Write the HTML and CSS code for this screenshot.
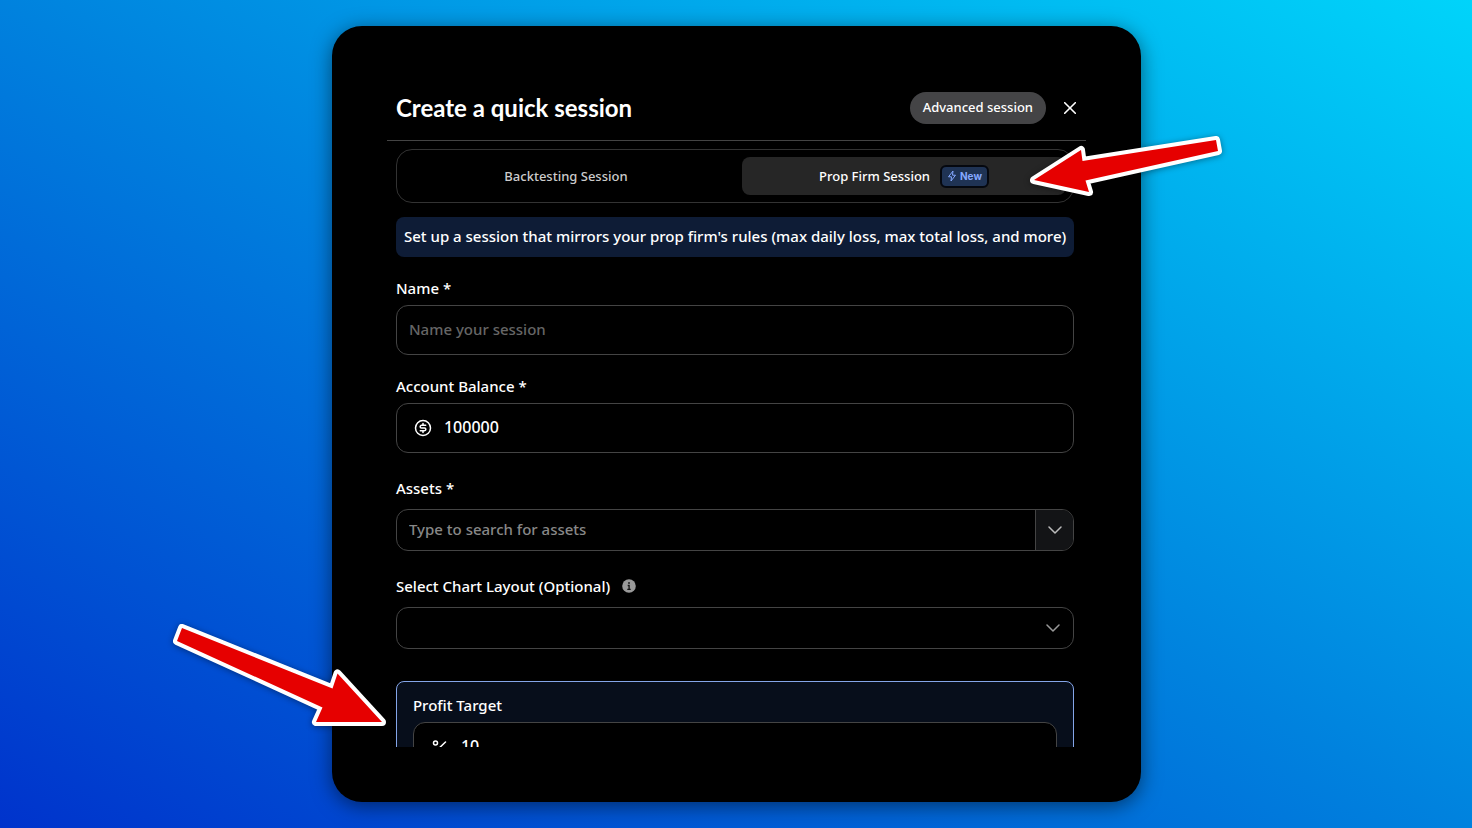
FILE: index.html
```html
<!DOCTYPE html>
<html lang="en">
<head>
    <meta charset="UTF-8">
    <meta name="viewport" content="width=device-width, initial-scale=1.0">
    <title>Create a quick session</title>
    <link rel="stylesheet" href="styles.css">
</head>
<body>
    <main class="modal">
        <header class="modal-header">
            <h1>Create a quick session</h1>
            <button type="button" class="advanced-btn">Advanced session</button>
            <button type="button" class="close-btn" aria-label="Close">
                <svg width="12" height="12" viewBox="0 0 12 12" fill="none" stroke="currentColor" stroke-width="1.6" stroke-linecap="round">
                    <path d="M.7.700l10.600 10.600M11.300.700L.7 11.300"/>
                </svg>
            </button>
        </header>

        <form class="modal-body">
            <div class="tabs">
                <button type="button" class="tab">Backtesting Session</button>
                <button type="button" class="tab active">
                    Prop Firm Session
                    <span class="badge">
                        <svg width="10" height="12" viewBox="0 0 10 12" fill="none" stroke="currentColor" stroke-linejoin="round">
                            <path d="M6 1L1.500 6.800h3L4 11l4.500-5.800h-3z"/>
                        </svg>
                        New
                    </span>
                </button>
            </div>

            <p class="notice">Set up a session that mirrors your prop firm's rules (max daily loss, max total loss, and more)</p>

            <div class="field">
                <label for="name">Name *</label>
                <div class="control tall">
                    <input type="text" id="name" placeholder="Name your session">
                </div>
            </div>

            <div class="field">
                <label for="balance">Account Balance *</label>
                <div class="control tall with-icon">
                    <svg width="18" height="18" viewBox="0 0 18 18" fill="none" stroke="currentColor" stroke-width="1.5" stroke-linecap="round" stroke-linejoin="round">
                        <circle cx="9" cy="9" r="7.500"/>
                        <path d="M11.700 6.300H7.500a1.350 1.350 0 0 0 0 2.700h3a1.350 1.350 0 0 1 0 2.700H6.300M9 4.600v1.700M9 11.700v1.700"/>
                    </svg>
                    <input type="text" id="balance" value="100000">
                </div>
            </div>

            <div class="field spaced">
                <label for="assets">Assets *</label>
                <div class="control">
                    <input type="text" id="assets" class="assets-input" placeholder="Type to search for assets">
                    <button type="button" class="drop-btn" aria-label="Show assets">
                        <svg width="14" height="8" viewBox="0 0 14 8" fill="none" stroke="currentColor" stroke-width="1.5" stroke-linecap="round" stroke-linejoin="round">
                            <path d="M1 1l6 6 6-6"/>
                        </svg>
                    </button>
                </div>
            </div>

            <div class="field spaced">
                <div class="label-row">
                    <label for="layout">Select Chart Layout (Optional)</label>
                    <svg width="14" height="14" viewBox="0 0 14 14">
                        <circle cx="7" cy="7" r="6.800" fill="#999"/>
                        <path d="M7 3v2M5.700 6.500H7.100V10M5.300 10.300h3.400" fill="none" stroke="#111" stroke-width="1.300"/>
                    </svg>
                </div>
                <div class="control">
                    <select id="layout">
                        <option value=""></option>
                    </select>
                    <svg class="select-arrow" width="14" height="8" viewBox="0 0 14 8" fill="none" stroke="currentColor" stroke-width="1.5" stroke-linecap="round" stroke-linejoin="round">
                        <path d="M1 1l6 6 6-6"/>
                    </svg>
                </div>
            </div>

            <section class="target-card">
                <label for="target">Profit Target</label>
                <div class="control tall with-icon">
                    <svg width="18" height="18" viewBox="0 0 18 18" fill="none" stroke="currentColor" stroke-width="1.5" stroke-linecap="round">
                        <circle cx="4.500" cy="5" r="2"/>
                        <circle cx="13" cy="13" r="2"/>
                        <path d="M14.500 4L3.500 14.500"/>
                    </svg>
                    <input type="text" id="target" value="10">
                </div>
            </section>
        </form>

        <!-- callout arrows -->
        <svg class="arrow arrow-tab" width="210" height="80" viewBox="0 0 210 80" aria-hidden="true">
            <path d="M14 50L61 20l1.500 11L196 10l2 11L65.500 50.500 69 62z"/>
        </svg>
        <svg class="arrow arrow-target" width="240" height="130" viewBox="0 0 240 130" aria-hidden="true">
            <path d="M23 18l-5 13 145.500 66.500L157 112h66l-44.500-48.500-5 15z"/>
        </svg>
    </main>
</body>
</html>
```

FILE: styles.css
```css
* {
    box-sizing: border-box;
}
body {
    margin: 0;
    padding: 26px 0 26px 1px;
    height: 100vh;
    overflow: hidden;
    background: linear-gradient(to top right, #0033cc, #0082de 50%, #00d4fa);
    color: #fff;
    font-family: "Noto Sans", sans-serif;
    font-size: 15px;
    line-height: 22px;
}
button,
input,
select {
    font: inherit;
    color: inherit;
}
button {
    border: none;
    cursor: pointer;
}
.modal {
    position: relative;
    display: flex;
    flex-direction: column;
    width: 55%;
    min-width: 760px;
    height: 100%;
    margin: 0 auto;
    padding: 55px;
    background: #000;
    border-radius: 30px;
    box-shadow: 0 4px 20px rgba(0, 0, 0, 0.5);
}
.modal-header {
    display: flex;
    align-items: center;
    padding: 11px 10px 16px 9px;
    border-bottom: 1px solid #444;
}
.modal-header h1 {
    flex: 1;
    margin: 0;
    font-family: Lato, sans-serif;
    font-size: 24px;
    line-height: 32px;
    font-weight: 700;
}
.advanced-btn {
    height: 32px;
    padding: 0 13px 2px;
    border-radius: 16px;
    background: #444446;
    font-size: 13px;
    font-weight: 500;
}
.close-btn {
    display: flex;
    margin-left: 18px;
    padding: 0;
    background: none;
}
.modal-body {
    flex: 1;
    min-height: 0;
    overflow: hidden;
    padding: 8px 12px 0 9px;
}
.tabs {
    display: grid;
    grid-template-columns: 1fr 1fr;
    gap: 14px;
    padding: 7px;
    border: 1px solid #333;
    border-radius: 16px;
}
.tab {
    display: flex;
    align-items: center;
    justify-content: center;
    gap: 10px;
    height: 38px;
    border-radius: 8px;
    background: none;
    color: #ccc;
    font-size: 13px;
    font-weight: 500;
}
.tab.active {
    background: #262626;
    color: #fff;
}
.badge {
    display: flex;
    align-items: center;
    gap: 3px;
    height: 23px;
    padding: 0 5px;
    border: 2px solid #05080f;
    border-radius: 6px;
    background: #1f3354;
    color: #85a8ff;
    font-family: Inter, sans-serif;
    font-size: 10px;
    font-weight: 700;
}
.notice {
    margin: 14px 0 0;
    padding: 8px 8px 10px;
    border-radius: 8px;
    background: #0e1c36;
    font-weight: 500;
    white-space: nowrap;
}
.field {
    display: flex;
    flex-direction: column;
    gap: 6px;
    margin-top: 20px;
    font-weight: 500;
}
.field.spaced {
    gap: 10px;
    margin-top: 24px;
}
.label-row {
    display: flex;
    align-items: center;
    gap: 12px;
}
.control {
    position: relative;
    display: flex;
    align-items: center;
    height: 42px;
    border: 1px solid #444;
    border-radius: 12px;
    background: #000;
    overflow: hidden;
}
.control.tall {
    height: 50px;
}
.control input,
.control select {
    flex: 1;
    min-width: 0;
    height: 100%;
    padding: 0 12px 2px;
    border: none;
    outline: none;
    background: none;
    appearance: none;
}
.control input::placeholder {
    color: #666;
}
.control .assets-input::placeholder {
    color: #888;
}
.control.with-icon {
    padding-left: 17px;
}
.control.with-icon input {
    font-size: 16px;
}
.drop-btn {
    display: flex;
    align-items: center;
    justify-content: center;
    width: 38px;
    height: 100%;
    padding: 0;
    border-left: 1px solid #444;
    background: #131416;
    color: #bbb;
}
.select-arrow {
    position: absolute;
    right: 13px;
    color: #999;
    pointer-events: none;
}
.target-card {
    display: flex;
    flex-direction: column;
    gap: 6px;
    margin-top: 32px;
    padding: 12px 16px 16px;
    border: 1px solid #84a5e8;
    border-radius: 8px;
    background: #070e1b;
    font-weight: 500;
}
.arrow {
    position: absolute;
    fill: #e60000;
    stroke: #fff;
    stroke-width: 8;
    stroke-linejoin: round;
    paint-order: stroke;
    filter: drop-shadow(0 1px 3px rgba(0, 0, 0, 0.4));
}
.arrow-tab {
    top: 104px;
    right: -89px;
}
.arrow-target {
    top: 584px;
    left: -173px;
}
```
